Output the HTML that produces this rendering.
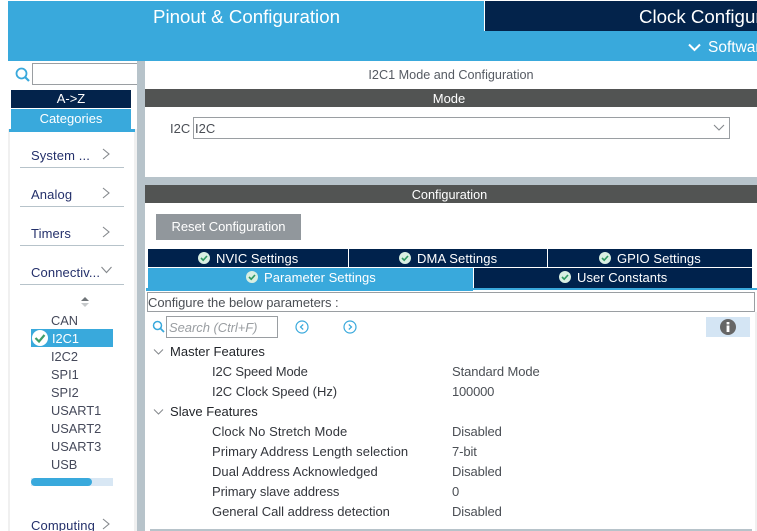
<!DOCTYPE html>
<html><head><meta charset="utf-8">
<style>
html,body{margin:0;padding:0;background:#fff}
#p{position:relative;width:757px;height:531px;overflow:hidden;background:#fff;font-family:"Liberation Sans",sans-serif;font-size:13px;color:#3a3f4a}
#p div,#p svg{position:absolute}
.t{white-space:nowrap;line-height:17px;height:17px}
.c{text-align:center}
.w{color:#fff}
.cat{color:#24306b;font-size:13px;left:31px;letter-spacing:.12px}
.sep{left:20px;width:104px;height:1px;background:#b7c3ca}
.it{left:51px;color:#45495a;font-size:12.8px}
.tab{background:#00224c;height:18px}
.r{left:212px;letter-spacing:.08px;color:#33363c}
.v{left:452px;letter-spacing:-.1px;color:#4b4f55}
.h{left:170px;letter-spacing:.02px;color:#22252a}
</style></head><body>
<div id="p">
<div style="left:8px;top:1px;width:749px;height:60px;background:#39a9dc"></div>
<div style="left:485px;top:1px;width:272px;height:30px;background:#03234b"></div>
<div style="left:484px;top:1px;width:1px;height:30px;background:#fff"></div>
<div class="t" style="left:153px;top:6px;height:22px;line-height:22px;font-size:18.7px;color:#fff">Pinout &amp; Configuration</div>
<div class="t" style="left:639px;top:6px;height:22px;line-height:22px;font-size:18.7px;color:#fff">Clock Configuration</div>
<svg style="left:687px;top:42px" width="16" height="12"><path d="M2 2.5 L7.5 8 L13 2.5" fill="none" stroke="#fff" stroke-width="2"/></svg>
<div class="t" style="left:708px;top:38px;height:20px;line-height:20px;font-size:15.5px;color:#fff">Software Packs</div>

<!-- left -->
<div style="left:8px;top:129px;width:2px;height:402px;background:#f0f0f0"></div>
<div style="left:134px;top:129px;width:3px;height:402px;background:#f0f0f0"></div>
<svg style="left:14px;top:66px" width="17" height="17"><circle cx="7.5" cy="7.5" r="5" fill="none" stroke="#39a9dc" stroke-width="1.8"/><path d="M11 11 L15 15" stroke="#39a9dc" stroke-width="2.2"/></svg>
<div style="left:32px;top:63px;width:106px;height:20px;border:1px solid #9a9ea2;box-sizing:content-box"></div>
<div class="t c" style="left:11px;top:90px;width:120px;height:18px;line-height:18px;background:#03234b;color:#fff">A-&gt;Z</div>
<div class="t c w" style="left:11px;top:109px;width:120px;height:20px;line-height:19px;background:#39a9dc">Categories</div>
<div style="left:9px;top:129px;width:126px;height:3px;background:#39a9dc"></div>

<div class="t cat" style="top:147px">System ...</div>
<svg style="left:101px;top:147px" width="10" height="14"><path d="M2 2 L8 7 L2 12" fill="none" stroke="#85898d" stroke-width="1.1"/></svg>
<div class="sep" style="top:167px"></div>
<div class="t cat" style="top:186px">Analog</div>
<svg style="left:101px;top:186px" width="10" height="14"><path d="M2 2 L8 7 L2 12" fill="none" stroke="#85898d" stroke-width="1.1"/></svg>
<div class="sep" style="top:206px"></div>
<div class="t cat" style="top:225px">Timers</div>
<svg style="left:101px;top:225px" width="10" height="14"><path d="M2 2 L8 7 L2 12" fill="none" stroke="#85898d" stroke-width="1.1"/></svg>
<div class="sep" style="top:245px"></div>
<div class="t cat" style="top:264px">Connectiv...</div>
<svg style="left:100px;top:265px" width="14" height="10"><path d="M1.5 2 L6.5 7.5 L11.5 2" fill="none" stroke="#85898d" stroke-width="1.1"/></svg>
<div class="sep" style="top:284px"></div>
<svg style="left:80px;top:296px" width="10" height="13"><path d="M1 5 L5 1 L9 5Z" fill="#6f7478"/><path d="M1 7 L5 11 L9 7Z" fill="#c6c9cb"/></svg>
<div class="t it" style="top:312px">CAN</div>
<div style="left:31px;top:329px;width:82px;height:18px;background:#39a9dc"></div>
<svg style="left:32px;top:330px" width="16" height="16"><circle cx="8" cy="8" r="8" fill="#fff"/><path d="M3.5 8 L7 11.5 L12.5 5" fill="none" stroke="#3f9e6a" stroke-width="2.2"/></svg>
<div class="t it" style="top:330px;left:52px;color:#fff">I2C1</div>
<div class="t it" style="top:348px">I2C2</div>
<div class="t it" style="top:366px">SPI1</div>
<div class="t it" style="top:384px">SPI2</div>
<div class="t it" style="top:402px">USART1</div>
<div class="t it" style="top:420px">USART2</div>
<div class="t it" style="top:438px">USART3</div>
<div class="t it" style="top:456px">USB</div>
<div style="left:31px;top:478px;width:82px;height:8px;background:#d8e7f4"></div>
<div style="left:31px;top:478px;width:61px;height:8px;background:#39a9dc;border-radius:4px"></div>
<div class="t cat" style="top:517px">Computing</div>
<svg style="left:101px;top:517px" width="10" height="14"><path d="M2 2 L8 7 L2 12" fill="none" stroke="#85898d" stroke-width="1.1"/></svg>

<!-- gutters -->
<div style="left:137px;top:61px;width:8px;height:470px;background:#b7c3ca"></div>
<div style="left:145px;top:177px;width:612px;height:8px;background:#b7c3ca"></div>

<!-- mode -->
<div class="t c" style="left:145px;top:67px;width:612px;font-size:12.65px;color:#555a62">I2C1 Mode and Configuration</div>
<div style="left:145px;top:89px;width:612px;height:18px;background:#525453"></div>
<div class="t c" style="left:145px;top:89px;width:608px;height:18px;line-height:19px;color:#fff">Mode</div>
<div class="t" style="left:170px;top:120px;color:#4a4e55">I2C</div>
<div style="left:193px;top:117px;width:535px;height:20px;border:1px solid #9a9ea2"></div>
<div class="t" style="left:195px;top:120px;color:#4a4e55">I2C</div>
<svg style="left:713px;top:124px" width="12" height="8"><path d="M1 1 L6 6 L11 1" fill="none" stroke="#85898d" stroke-width="1.1"/></svg>

<!-- config -->
<div style="left:145px;top:185px;width:612px;height:18px;background:#525453"></div>
<div class="t c" style="left:145px;top:186px;width:609px;height:18px;line-height:19px;color:#fff;font-size:12.7px">Configuration</div>
<div class="t c w" style="left:156px;top:214px;width:145px;height:26px;line-height:26px;background:#91979c;letter-spacing:-.05px">Reset Configuration</div>

<div class="tab" style="left:148px;top:249px;width:200px"></div>
<div class="tab" style="left:349px;top:249px;width:198px"></div>
<div class="tab" style="left:548px;top:249px;width:204px"></div>
<div style="left:148px;top:268px;width:325px;height:20px;background:#39a9dc"></div>
<div class="tab" style="left:474px;top:268px;width:278px;height:20px"></div>
<div style="left:146px;top:288px;width:611px;height:2px;background:#39a9dc"></div>
<div style="left:146px;top:290px;width:327px;height:1px;background:#39a9dc"></div>

<svg style="left:198px;top:252px" width="12" height="12"><circle cx="6" cy="6" r="6" fill="#d8efe2"/><path d="M3 6 L5.2 8.2 L9 4" fill="none" stroke="#2f9a62" stroke-width="1.6"/></svg>
<div class="t w" style="left:216px;top:250px;letter-spacing:.05px">NVIC Settings</div>
<svg style="left:399px;top:252px" width="12" height="12"><circle cx="6" cy="6" r="6" fill="#d8efe2"/><path d="M3 6 L5.2 8.2 L9 4" fill="none" stroke="#2f9a62" stroke-width="1.6"/></svg>
<div class="t w" style="left:417px;top:250px;letter-spacing:.12px">DMA Settings</div>
<svg style="left:599px;top:252px" width="12" height="12"><circle cx="6" cy="6" r="6" fill="#d8efe2"/><path d="M3 6 L5.2 8.2 L9 4" fill="none" stroke="#2f9a62" stroke-width="1.6"/></svg>
<div class="t w" style="left:617px;top:250px;letter-spacing:.05px">GPIO Settings</div>
<svg style="left:246px;top:271px" width="12" height="12"><circle cx="6" cy="6" r="6" fill="#d8efe2"/><path d="M3 6 L5.2 8.2 L9 4" fill="none" stroke="#2f9a62" stroke-width="1.6"/></svg>
<div class="t w" style="left:264px;top:269px;letter-spacing:.03px">Parameter Settings</div>
<svg style="left:559px;top:271px" width="12" height="12"><circle cx="6" cy="6" r="6" fill="#d8efe2"/><path d="M3 6 L5.2 8.2 L9 4" fill="none" stroke="#2f9a62" stroke-width="1.6"/></svg>
<div class="t w" style="left:577px;top:269px;letter-spacing:.05px">User Constants</div>

<div style="left:147px;top:292px;width:606px;height:18px;border:1px solid #9a9ea2"></div>
<div class="t" style="left:148px;top:294px;letter-spacing:-.05px;color:#4b4f55">Configure the below parameters :</div>

<svg style="left:152px;top:320px" width="13" height="14"><circle cx="5.5" cy="5.5" r="4" fill="none" stroke="#39a9dc" stroke-width="1.5"/><path d="M8.5 8.5 L12 12" stroke="#39a9dc" stroke-width="1.8"/></svg>
<div style="left:166px;top:316px;width:110px;height:20px;border:1px solid #9a9ea2"></div>
<div class="t" style="left:169px;top:319px;font-style:italic;color:#9a9ea2;letter-spacing:-.05px">Search (Ctrl+F)</div>
<svg style="left:295px;top:320px" width="14" height="14"><circle cx="7" cy="7" r="6" fill="#fff" stroke="#39a9dc" stroke-width="1.2"/><path d="M8.2 4.5 L5.5 7 L8.2 9.5" fill="none" stroke="#39a9dc" stroke-width="1.2"/></svg>
<svg style="left:343px;top:320px" width="14" height="14"><circle cx="7" cy="7" r="6" fill="#fff" stroke="#39a9dc" stroke-width="1.2"/><path d="M5.8 4.5 L8.5 7 L5.8 9.5" fill="none" stroke="#39a9dc" stroke-width="1.2"/></svg>
<div style="left:706px;top:317px;width:44px;height:20px;background:#d4e5f4"></div>
<svg style="left:720px;top:319px" width="16" height="16"><circle cx="8" cy="8" r="8" fill="#666"/><rect x="6.6" y="6.5" width="2.8" height="6.5" fill="#fff"/><rect x="6.6" y="3" width="2.8" height="2.4" fill="#fff"/></svg>

<!-- tree -->
<svg style="left:153px;top:348px" width="11" height="8"><path d="M1 1.5 L5.5 6 L10 1.5" fill="none" stroke="#85898d" stroke-width="1"/></svg>
<div class="t h" style="top:343px">Master Features</div>
<div class="t r" style="top:363px;letter-spacing:-.13px">I2C Speed Mode</div>
<div class="t v" style="top:363px">Standard Mode</div>
<div class="t r" style="top:383px;letter-spacing:-.03px">I2C Clock Speed (Hz)</div>
<div class="t v" style="top:383px;letter-spacing:-.2px">100000</div>
<svg style="left:153px;top:408px" width="11" height="8"><path d="M1 1.5 L5.5 6 L10 1.5" fill="none" stroke="#85898d" stroke-width="1"/></svg>
<div class="t h" style="top:403px">Slave Features</div>
<div class="t r" style="top:423px">Clock No Stretch Mode</div>
<div class="t v" style="top:423px">Disabled</div>
<div class="t r" style="top:443px">Primary Address Length selection</div>
<div class="t v" style="top:443px">7-bit</div>
<div class="t r" style="top:463px;letter-spacing:.04px">Dual Address Acknowledged</div>
<div class="t v" style="top:463px">Disabled</div>
<div class="t r" style="top:483px;letter-spacing:-.06px">Primary slave address</div>
<div class="t v" style="top:483px">0</div>
<div class="t r" style="top:503px;letter-spacing:-.02px">General Call address detection</div>
<div class="t v" style="top:503px">Disabled</div>
<div style="left:150px;top:529px;width:602px;height:2px;background:#b7c3ca"></div>
<div style="left:755px;top:312px;width:2px;height:219px;background:#f0f0f0"></div>
</div>
</body></html>
